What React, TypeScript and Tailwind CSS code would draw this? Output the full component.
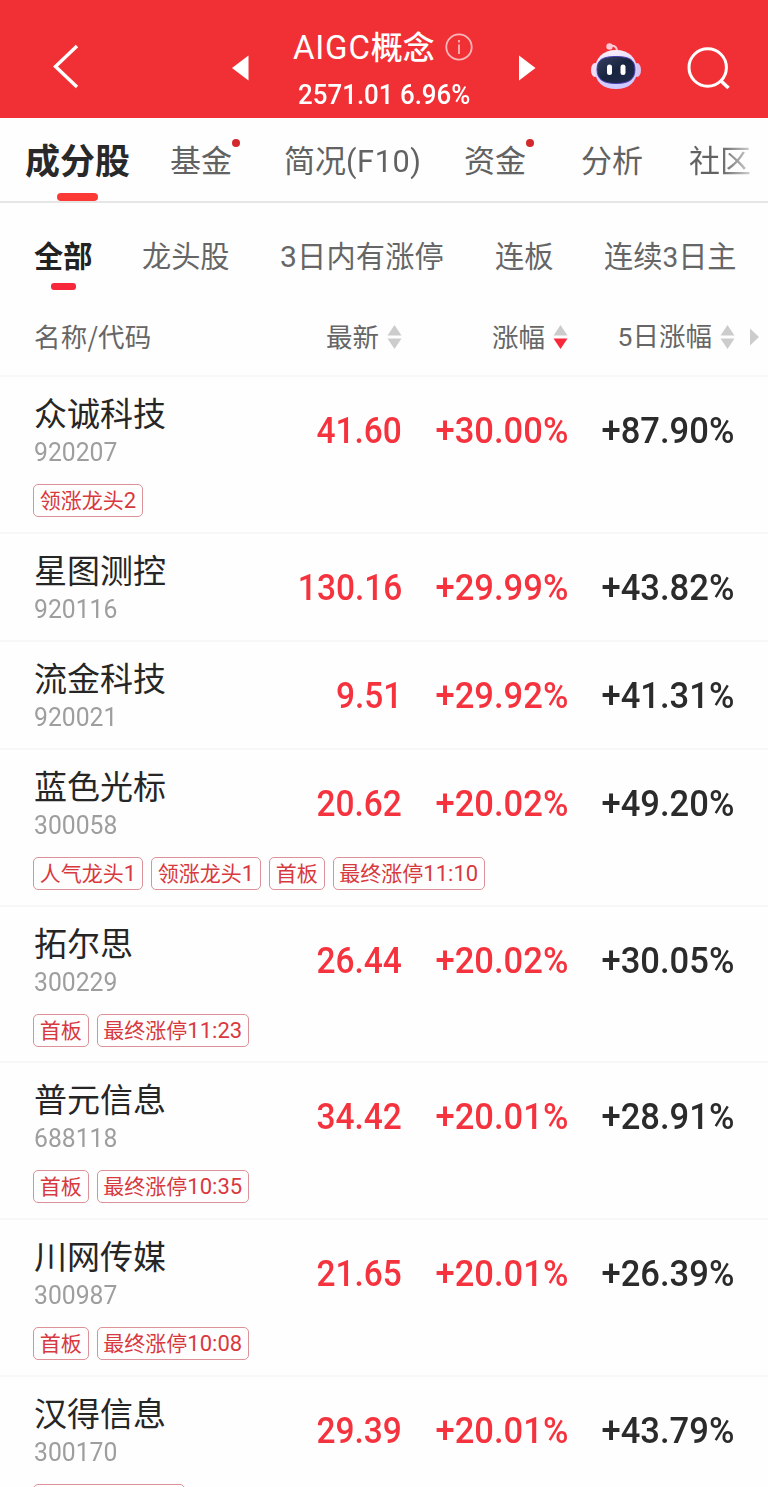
import type { ReactNode } from "react";

type Stock = {
  name: string;
  code: string;
  price: string;
  change: string;
  change5: string;
  tags?: string[];
};

const stocks: Stock[] = [
  { name: "众诚科技", code: "920207", price: "41.60", change: "+30.00%", change5: "+87.90%", tags: ["领涨龙头2"] },
  { name: "星图测控", code: "920116", price: "130.16", change: "+29.99%", change5: "+43.82%" },
  { name: "流金科技", code: "920021", price: "9.51", change: "+29.92%", change5: "+41.31%" },
  { name: "蓝色光标", code: "300058", price: "20.62", change: "+20.02%", change5: "+49.20%", tags: ["人气龙头1", "领涨龙头1", "首板", "最终涨停11:10"] },
  { name: "拓尔思", code: "300229", price: "26.44", change: "+20.02%", change5: "+30.05%", tags: ["首板", "最终涨停11:23"] },
  { name: "普元信息", code: "688118", price: "34.42", change: "+20.01%", change5: "+28.91%", tags: ["首板", "最终涨停10:35"] },
  { name: "川网传媒", code: "300987", price: "21.65", change: "+20.01%", change5: "+26.39%", tags: ["首板", "最终涨停10:08"] },
  { name: "汉得信息", code: "300170", price: "29.39", change: "+20.01%", change5: "+43.79%", tags: [""] },
];

const tagWidths: Record<number, string> = {
  0: "w-[152px]",
  2: "w-[55.5px]",
  5: "w-[110px]",
  9: "w-[152.5px]",
};

function Header() {
  return (
    <header className="flex h-[118px] shrink-0 bg-[#f13035] text-white">
      <svg className="mt-[42px] ml-[50px] h-[50px] w-[32px] shrink-0" viewBox="0 0 32 50" fill="none" stroke="currentColor" strokeWidth="3.4">
        <path d="M27 4 5.500 24.500 27 45" />
      </svg>
      <svg className="mt-[55px] ml-[150px] h-[26px] w-[17px] shrink-0" viewBox="0 0 17 26" fill="currentColor">
        <path d="M0 13 16.500 0.500V25.500z" />
      </svg>
      <div className="mt-[23px] ml-[44px] w-[182px] shrink-0">
        <div className="flex h-[46px] items-center">
          <span className="w-[142px] text-[32px] leading-[46px] font-medium whitespace-nowrap">
            <span className="font-[Roboto] text-[33px] font-normal tracking-[0.8px]">AIGC</span>概念
          </span>
          <svg className="mt-px ml-[9.500px] h-[28px] w-[28px] shrink-0 opacity-65" viewBox="0 0 28 28" fill="none" stroke="currentColor" strokeWidth="1.8">
            <circle cx="14" cy="14" r="12.700" />
            <path d="M14 11.500V21M14 7v2.500" />
          </svg>
        </div>
        <div className="mt-[2px] ml-[5px] h-[48px] origin-left scale-x-[0.925] font-[Roboto] text-[28px] leading-[48px] font-medium whitespace-nowrap">
          2571.01 6.96%
        </div>
      </div>
      <svg className="mt-[55px] ml-[44px] h-[26px] w-[17px] shrink-0" viewBox="0 0 17 26" fill="currentColor">
        <path d="M0 0.500 16.500 13 0 25.500z" />
      </svg>
      <svg className="mt-[40px] ml-[54px] h-[52px] w-[52px] shrink-0" viewBox="0 0 52 52">
        <defs>
          <linearGradient id="shell" x1="0" y1="0" x2="0.300" y2="1">
            <stop offset="0" stopColor="#fff4fb" />
            <stop offset="0.600" stopColor="#ddd4fa" />
            <stop offset="1" stopColor="#cfcaff" />
          </linearGradient>
          <linearGradient id="visor" x1="0" y1="0" x2="1" y2="1">
            <stop offset="0" stopColor="#34405f" />
            <stop offset="0.500" stopColor="#18243f" />
            <stop offset="1" stopColor="#222b50" />
          </linearGradient>
        </defs>
        <path d="M19.500 6.500c4-1.500 7.500-.5 7.500 5" fill="none" stroke="#ffc7d3" strokeWidth="2" />
        <circle cx="19.500" cy="6.500" r="3.200" fill="#ffc7d6" />
        <ellipse cx="5" cy="30" rx="4" ry="7" fill="#f3ddf5" />
        <ellipse cx="47" cy="30" rx="4" ry="7" fill="#d9c3f2" />
        <path d="M26 10c13 0 21 8 21 20 0 12-8 19-21 19S5 42 5 30c0-12 8-20 21-20z" fill="url(#shell)" />
        <path d="M26 16.500c13 0 19 3 19 13C45 40 38 43.500 26 43.500S7 40 7 29.500c0-10 6-13 19-13z" fill="url(#visor)" stroke="#4d3fb5" strokeWidth="1" />
        <rect x="17" y="24.500" width="5" height="10.500" rx="2.500" fill="#fff" />
        <rect x="30.500" y="24.500" width="5" height="10.500" rx="2.500" fill="#fff" />
      </svg>
      <svg className="mt-[44px] ml-[44px] h-[48px] w-[48px] shrink-0" viewBox="0 0 48 48" fill="none" stroke="currentColor" strokeWidth="3">
        <circle cx="21.700" cy="23.500" r="18.700" />
        <path d="M34 36 42.500 44" strokeWidth="3.600" />
      </svg>
    </header>
  );
}

function Dot() {
  return <span className="absolute top-[3px] right-[-8px] h-[8px] w-[8px] rounded-full bg-[#d3282c]" />;
}

function Tabs() {
  return (
    <nav className="flex h-[85px] shrink-0 border-b-2 border-[#e6e6e6] pt-[18px] pl-[25px] text-[31px] leading-[46px] whitespace-nowrap text-[#626262]">
      <div className="flex w-[145px] shrink-0 flex-col text-[35px] font-bold text-[#292929]">
        成分股
        <span className="mt-[11px] ml-[32px] h-[8px] w-[41px] rounded-full bg-[#fb3a36]" />
      </div>
      <div className="w-[114px] shrink-0">
        <span className="relative inline-block h-[46px]">基金<Dot /></span>
      </div>
      <div className="w-[180px] shrink-0">
        简况<span className="inline-block origin-left scale-x-[0.96] font-[Roboto] text-[32px] font-normal tracking-[0.6px]">(F10)</span>
      </div>
      <div className="w-[117px] shrink-0">
        <span className="relative inline-block h-[46px]">资金<Dot /></span>
      </div>
      <div className="w-[108px] shrink-0">分析</div>
      <div className="h-[46px] shrink-0 bg-linear-to-r from-[#626262] from-50% to-[#d4d4d4] bg-clip-text text-transparent">社区</div>
    </nav>
  );
}

function Filters() {
  return (
    <nav className="flex h-[95px] shrink-0 pt-[29px] pl-[34px] text-[29.2px] leading-[44px] whitespace-nowrap text-[#666]">
      <div className="flex w-[108px] shrink-0 flex-col font-bold text-[#222]">
        全部
        <span className="mt-[7px] ml-[17px] h-[7px] w-[25px] rounded-[3px] bg-[#f8283a]" />
      </div>
      <div className="w-[138px] shrink-0">龙头股</div>
      <div className="w-[215px] shrink-0 tracking-[0.2px]"><span className="font-[Roboto] text-[30px]">3</span>日内有涨停</div>
      <div className="w-[109px] shrink-0">连板</div>
      <div className="shrink-0">连续<span className="font-[Roboto] text-[28px]">3</span>日主</div>
    </nav>
  );
}

function Sort({ active = false }: { active?: boolean }) {
  return (
    <svg className="h-[26px] w-[15px] shrink-0" viewBox="0 0 15 26">
      <path d="M7.500 1 14.500 11.500H0.500z" fill="#ccc" />
      <path d="M0.500 14.500h14L7.500 25z" fill={active ? "#f8283a" : "#ccc"} />
    </svg>
  );
}

function Column({ className, children, active }: { className: string; children: ReactNode; active?: boolean }) {
  return (
    <div className={`flex shrink-0 items-center justify-end gap-[8px] ${className}`}>
      <span className="-mt-[2px]">{children}</span>
      <Sort active={active} />
    </div>
  );
}

function TableHead() {
  return (
    <div className="flex h-[79px] shrink-0 items-center border-b-2 border-[#f7f7f7] pl-[34px] text-[26.5px] leading-[40px] whitespace-nowrap text-[#666]">
      <div className="-mt-[2px] w-[168px] shrink-0 tracking-[0.2px]">名称/代码</div>
      <Column className="w-[200px]">最新</Column>
      <Column className="w-[166px]" active>涨幅</Column>
      <Column className="w-[167px]"><span className="font-[Roboto]">5</span>日涨幅</Column>
      <svg className="ml-[15px] h-[18px] w-[9px] shrink-0" viewBox="0 0 9 18" fill="#ccc">
        <path d="M0 0.500 9 9 0 17.500z" />
      </svg>
    </div>
  );
}

function Figure({ className, children }: { className: string; children: ReactNode }) {
  return (
    <div className={`flex shrink-0 justify-end pt-[32px] font-[Roboto] text-[36px] leading-[44px] font-medium ${className}`}>
      {children}
    </div>
  );
}

function Row({ stock }: { stock: Stock }) {
  return (
    <div className={`flex shrink-0 flex-col border-b-2 border-[#f7f7f7] pl-[34px] ${stock.tags ? "h-[156.7px]" : "h-[108.2px]"}`}>
      <div className="flex h-[107px] shrink-0">
        <div className="w-[168px] shrink-0 pt-[12px]">
          <div className="h-[45px] text-[33px] leading-[46px] whitespace-nowrap text-[#262626]">{stock.name}</div>
          <div className="h-[36px] origin-left scale-x-[0.95] font-[Roboto] text-[26px] leading-[36px] text-[#9e9e9e]">{stock.code}</div>
        </div>
        <Figure className="w-[200px] text-[#f5333e]">
          <span className="inline-block origin-right scale-x-[0.93]">{stock.price}</span>
        </Figure>
        <Figure className="w-[166px] text-[#f5333e]">
          <span className="inline-block origin-right scale-x-[0.96]">{stock.change}</span>
        </Figure>
        <Figure className="w-[166px] text-[#2b2b2b]">
          <span className="inline-block origin-right scale-x-[0.96]">{stock.change5}</span>
        </Figure>
      </div>
      {stock.tags && (
        <div className="-ml-px flex gap-[8px]">
          {stock.tags.map((tag, i) => (
            <span
              key={i}
              className={`flex h-[33px] shrink-0 items-center justify-center rounded-[5px] border border-[#dc9298] pb-px text-[21px] leading-[30px] whitespace-nowrap text-[#d8393f] ${tagWidths[tag.length]}`}
            >
              <span>
                {tag.replace(/[\d:]+$/, "")}
                <span className="font-[Roboto] text-[22px]">{tag.match(/[\d:]+$/)?.[0]}</span>
              </span>
            </span>
          ))}
        </div>
      )}
    </div>
  );
}

export default function App() {
  return (
    <div className="flex h-[1487px] w-[768px] flex-col overflow-hidden bg-[#fefefe] font-['Noto_Sans_CJK_SC',sans-serif]">
      <Header />
      <Tabs />
      <Filters />
      <TableHead />
      {stocks.map((stock) => (
        <Row key={stock.code} stock={stock} />
      ))}
    </div>
  );
}
